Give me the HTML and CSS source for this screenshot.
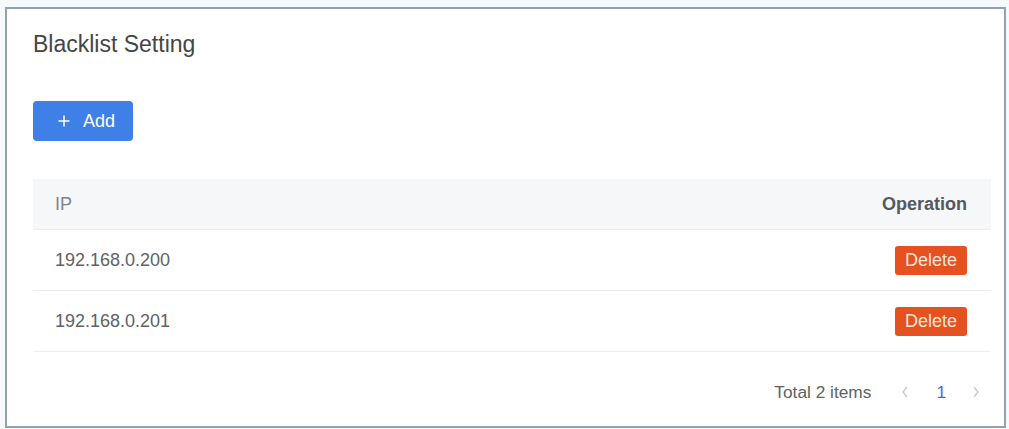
FILE: index.html
```html
<!DOCTYPE html>
<html lang="en">
<head>
  <meta charset="UTF-8">
  <title>Blacklist Setting</title>
  <meta name="viewport" content="width=device-width, initial-scale=1.0">
  <link rel="stylesheet" href="styles.css">
</head>
<body>

  <div class="card">
    <h1 class="title">Blacklist Setting</h1>

    <button class="btn-add" type="button">
      <svg width="12" height="12" viewBox="0 0 12 12"><path d="M6 0.5v11M0.5 6h11" stroke="#fff" stroke-width="1.5" fill="none"/></svg>
      <span>Add</span>
    </button>

    <table class="list">
      <tr><th>IP</th><th class="op">Operation</th></tr>
      <tr><td>192.168.0.200</td><td class="op"><button class="btn-del" type="button">Delete</button></td></tr>
      <tr><td>192.168.0.201</td><td class="op"><button class="btn-del" type="button">Delete</button></td></tr>
    </table>

    <div class="pager">
      <span class="total">Total 2 items</span>
      <span class="arrow">
        <svg width="8" height="12" viewBox="0 0 8 12"><path d="M6 1L2 6l4 5" stroke="#c4c8d0" stroke-width="1.3" fill="none"/></svg>
      </span>
      <span class="page">1</span>
      <span class="arrow">
        <svg width="8" height="12" viewBox="0 0 8 12"><path d="M2 1l4 5-4 5" stroke="#c4c8d0" stroke-width="1.3" fill="none"/></svg>
      </span>
    </div>
  </div>

</body>
</html>
```

FILE: styles.css
```css
body {
  margin: 0;
  padding: 7px 3px 1px 5px;
  font-family: 'Liberation Sans', Arial, sans-serif;
  background: #f7fafc;
}
.card {
  box-sizing: border-box;
  width: 1001px;
  height: 421px;
  border: 2px solid #8fa3b1;
  background: #fff;
  padding: 20px 13px 0 26px;
}
.title {
  margin: 0;
  font-size: 23px;
  line-height: 30px;
  font-weight: normal;
  color: #454545;
}
.btn-add {
  display: flex;
  align-items: center;
  gap: 13px;
  margin-top: 42px;
  width: 100px;
  height: 40px;
  padding: 0 0 0 25px;
  border: none;
  border-radius: 4px;
  background-color: #3f7fe8;
  color: white;
  font-family: inherit;
  font-size: 18px;
  cursor: pointer;
}
.list {
  width: 958px;
  border-collapse: collapse;
  margin-top: 38px;
}
th, td {
  text-align: left;
  padding: 0 0 0 22px;
  border-bottom: 1px solid #ebedf0;
  font-size: 18px;
  color: #606266;
}
th {
  height: 50px;
  background-color: #f6f7f9;
  font-weight: normal;
  color: #7f838a;
}
th.op {
  font-weight: bold;
  color: #55585e;
}
td {
  height: 60px;
}
.op {
  text-align: right;
  padding: 0 24px 0 0;
}
.btn-del {
  width: 72px;
  height: 29px;
  border: none;
  border-radius: 3px;
  background-color: #e5521f;
  color: #fbe3d9;
  font-family: inherit;
  font-size: 18px;
  padding: 0;
  cursor: pointer;
}
.pager {
  display: flex;
  align-items: center;
  justify-content: flex-end;
  height: 32px;
  margin-top: 24px;
  width: 958px;
  padding-right: 11px;
  box-sizing: border-box;
  color: #606266;
  font-size: 17.3px;
}
.total {
  margin-right: 30px;
}
.arrow {
  display: flex;
  width: 8px;
}
.page {
  margin: 0 26px 0 27px;
  color: #3b6fd9;
}
```
